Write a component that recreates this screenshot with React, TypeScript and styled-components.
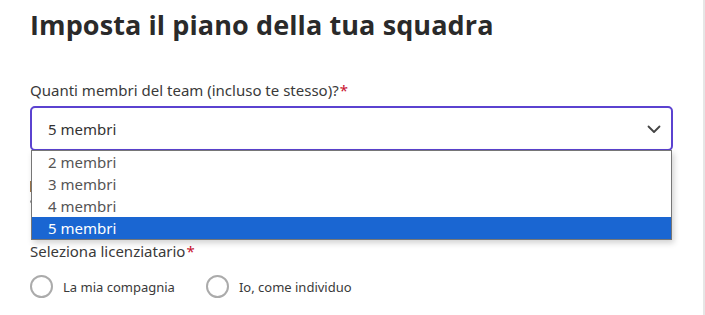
import React from "react";
import styled, { createGlobalStyle } from "styled-components";

const GlobalStyle = createGlobalStyle`
  html, body {
    margin: 0;
    padding: 0;
    background: #ffffff;
  }
  body {
    font-family: "Noto Sans", "Open Sans", sans-serif;
    color: #333333;
  }
`;

const Page = styled.div`
  width: 703px;
  height: 315px;
  border-right: 2px solid #e6e6e6;
  box-sizing: content-box;
  overflow: hidden;
`;

const Content = styled.div`
  padding: 8px 30px 0 30px;
  width: 643px;
  display: flex;
  flex-direction: column;
`;

const Heading = styled.h1`
  margin: 0;
  font-family: "Open Sans", sans-serif;
  font-weight: 700;
  font-size: 27px;
  line-height: 34px;
  color: #2a2a2a;
  letter-spacing: 0.1px;
`;

const Label = styled.div`
  font-size: 15px;
  line-height: 20px;
  color: #3a3a3a;
`;

const Required = styled.span`
  color: #c8102e;
  margin-left: 1px;
`;

const Field = styled.div`
  position: relative;
  margin-top: 38px;
  display: flex;
  flex-direction: column;
  gap: 6px;
`;

const SelectBox = styled.div`
  height: 45px;
  box-sizing: border-box;
  border: 2px solid #5b42d0;
  border-radius: 5px;
  display: flex;
  align-items: center;
  justify-content: space-between;
  padding: 0 9px 0 16px;
  font-size: 15px;
  color: #333333;
  background: #ffffff;
`;

const Menu = styled.ul`
  position: absolute;
  top: 70px;
  left: 1px;
  width: 641px;
  margin: 0;
  padding: 0;
  list-style: none;
  background: #ffffff;
  border: 1px solid #767676;
  box-sizing: border-box;
  box-shadow: 2px 3px 6px rgba(0, 0, 0, 0.18);
  z-index: 2;
`;

const Option = styled.li<{ $active?: boolean }>`
  height: 22px;
  line-height: 22px;
  padding-left: 16px;
  font-size: 15px;
  color: ${(p) => (p.$active ? "#ffffff" : "#555555")};
  background: ${(p) => (p.$active ? "#1a66d2" : "transparent")};
`;

const HintArea = styled.div`
  margin-top: 30px;
  height: 60px;
  display: flex;
  flex-direction: column;
  gap: 8px;
`;

const HintBar = styled.span`
  width: 3px;
  height: 11px;
  background: #a0784a;
`;

const HintDot = styled.span`
  width: 3px;
  height: 3px;
  border-radius: 50%;
  background: #8a8a8a;
`;

const Licensee = styled.div`
  display: flex;
  flex-direction: column;
  gap: 14px;
`;

const RadioRow = styled.div`
  display: flex;
  align-items: center;
  gap: 31px;
`;

const RadioItem = styled.label`
  display: flex;
  align-items: center;
  gap: 10px;
  font-size: 13px;
  color: #3a3a3a;
`;

const Circle = styled.span`
  width: 23px;
  height: 23px;
  box-sizing: border-box;
  border: 2px solid #ababab;
  border-radius: 50%;
  display: inline-block;
`;

const Chevron = () => (
  <svg width="16" height="16" viewBox="0 0 16 16" fill="none">
    <path d="M2.5 5.5 L8 11 L13.5 5.5" stroke="#444" strokeWidth="1.8" strokeLinecap="round" strokeLinejoin="round" />
  </svg>
);

const options = ["2 membri", "3 membri", "4 membri", "5 membri"];

const App = () => {
  return (
    <>
      <GlobalStyle />
      <Page>
        <Content>
          <Heading>Imposta il piano della tua squadra</Heading>

          <Field>
            <Label>
              Quanti membri del team (incluso te stesso)?<Required>*</Required>
            </Label>
            <SelectBox>
              <span>5 membri</span>
              <Chevron />
            </SelectBox>
            <Menu>
              {options.map((o) => (
                <Option key={o} $active={o === "5 membri"}>
                  {o}
                </Option>
              ))}
            </Menu>
          </Field>

          {/* partly hidden under the open menu */}
          <HintArea>
            <HintBar />
            <HintDot />
          </HintArea>

          <Licensee>
            <Label>
              Seleziona licenziatario<Required>*</Required>
            </Label>
            <RadioRow>
              <RadioItem>
                <Circle />
                La mia compagnia
              </RadioItem>
              <RadioItem>
                <Circle />
                Io, come individuo
              </RadioItem>
            </RadioRow>
          </Licensee>
        </Content>
      </Page>
    </>
  );
};

export default App;
